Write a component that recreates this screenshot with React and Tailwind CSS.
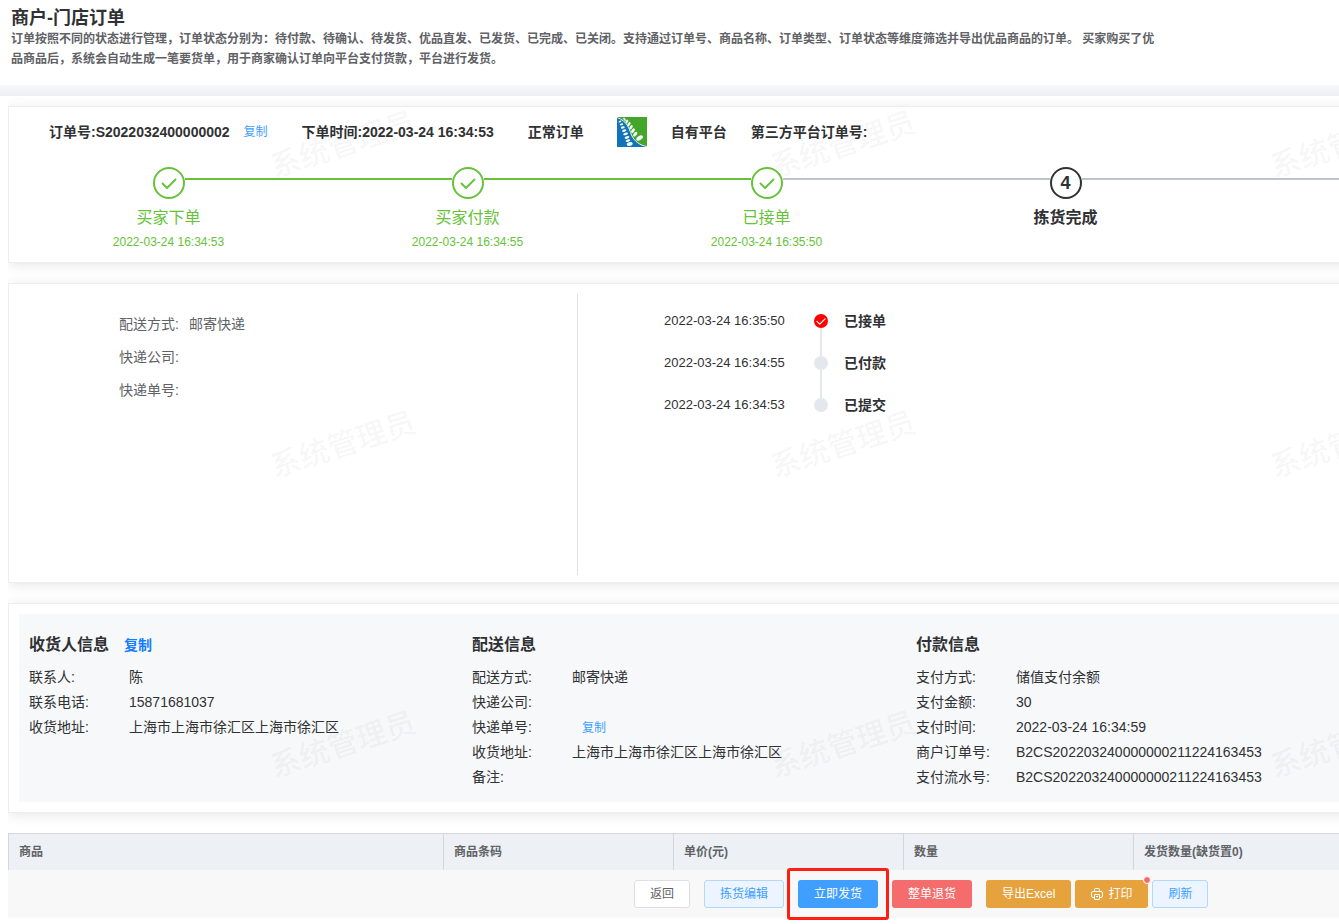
import React from "react";

const steps = [
  { title: "买家下单", time: "2022-03-24 16:34:53", done: true },
  { title: "买家付款", time: "2022-03-24 16:34:55", done: true },
  { title: "已接单", time: "2022-03-24 16:35:50", done: true },
  { title: "拣货完成", time: "", done: false },
];

const logs = [
  { time: "2022-03-24 16:35:50", text: "已接单" },
  { time: "2022-03-24 16:34:55", text: "已付款" },
  { time: "2022-03-24 16:34:53", text: "已提交" },
];

const delivery = [
  { label: "配送方式:", value: "邮寄快递" },
  { label: "快递公司:", value: "" },
  { label: "快递单号:", value: "" },
];

const receiverRows = [
  { label: "联系人:", value: "陈" },
  { label: "联系电话:", value: "15871681037" },
  { label: "收货地址:", value: "上海市上海市徐汇区上海市徐汇区" },
];

const deliveryRows = [
  { label: "配送方式:", value: "邮寄快递" },
  { label: "快递公司:", value: "" },
  { label: "快递单号:", value: "", copy: true },
  { label: "收货地址:", value: "上海市上海市徐汇区上海市徐汇区" },
  { label: "备注:", value: "" },
];

const paymentRows = [
  { label: "支付方式:", value: "储值支付余额" },
  { label: "支付金额:", value: "30" },
  { label: "支付时间:", value: "2022-03-24 16:34:59" },
  { label: "商户订单号:", value: "B2CS202203240000000211224163453" },
  { label: "支付流水号:", value: "B2CS202203240000000211224163453" },
];

const PlatformLogo = () => (
  <svg width="30" height="30" viewBox="0 0 30 30" className="shrink-0">
    <rect width="30" height="30" fill="#43a62b" />
    <path d="M0 0 H1 C10 4 12 11 14.500 18 C17 24 23 28.500 30 29.500 V30 H0 Z" fill="#1273b8" />
    <path
      d="M0 0.500 C10 4 12 11 14.500 18 C17 24 23 28.500 30 29.500"
      fill="none"
      stroke="#e9f5ee"
      strokeWidth="1"
    />
    <g fill="#f4faf6">
      <ellipse cx="7.500" cy="2.300" rx="1.800" ry="1" transform="rotate(55 7.500 2.300)" />
      <ellipse cx="9.800" cy="4.500" rx="2" ry="1.100" transform="rotate(-55 9.800 4.500)" />
      <ellipse cx="12" cy="7.200" rx="2.300" ry="1.200" transform="rotate(-58 12 7.200)" />
      <ellipse cx="14" cy="10.300" rx="2.500" ry="1.300" transform="rotate(-58 14 10.300)" />
      <ellipse cx="16" cy="13.600" rx="2.600" ry="1.400" transform="rotate(-55 16 13.600)" />
      <ellipse cx="18.200" cy="17.200" rx="2.800" ry="1.500" transform="rotate(-50 18.200 17.200)" />
      <ellipse cx="22.600" cy="21" rx="3.700" ry="2.100" transform="rotate(-32 22.600 21)" />
      <ellipse cx="3" cy="4.500" rx="1.500" ry="0.800" transform="rotate(-15 3 4.500)" />
      <ellipse cx="4.500" cy="7.400" rx="1.800" ry="1" transform="rotate(-15 4.500 7.400)" />
      <ellipse cx="5.800" cy="10.400" rx="2" ry="1.100" transform="rotate(-15 5.800 10.400)" />
      <ellipse cx="7.200" cy="13.600" rx="2.200" ry="1.200" transform="rotate(-15 7.200 13.600)" />
      <ellipse cx="8.600" cy="16.900" rx="2.400" ry="1.300" transform="rotate(-15 8.600 16.900)" />
      <ellipse cx="10" cy="20.400" rx="2.500" ry="1.300" transform="rotate(-15 10 20.400)" />
      <ellipse cx="11" cy="23.700" rx="2.400" ry="1.200" transform="rotate(-15 11 23.700)" />
      <ellipse cx="12.700" cy="27" rx="3" ry="1.900" transform="rotate(-15 12.700 27)" />
    </g>
  </svg>
);

const PrinterIcon = () => (
  <svg width="12" height="12" viewBox="0 0 12 12" fill="none" stroke="currentColor" strokeWidth="1">
    <path d="M3.500 3.500 V1.500 Q3.500 0.500 4.500 0.500 H7.500 Q8.500 0.500 8.500 1.500 V3.500" />
    <path d="M3 9.500 H2 Q0.500 9.500 0.500 8 V5 Q0.500 3.500 2 3.500 H10 Q11.500 3.500 11.500 5 V8 Q11.500 9.500 10 9.500 H9" />
    <path d="M3.500 6.500 H8.500 V11.500 H3.500 Z M5 8.500 H7" />
  </svg>
);

const Check = ({ size }) => (
  <svg
    width={size}
    height={size}
    viewBox="0 0 16 16"
    fill="none"
    stroke="currentColor"
    strokeWidth="1.900"
    strokeLinecap="round"
    strokeLinejoin="round"
  >
    <path d="M1.500 8.500 L6 13 L14.500 4.500" />
  </svg>
);

const Card = ({ children }) => (
  <section className="border border-[#ebeef5] bg-white shadow-[0_2px_12px_rgba(0,0,0,0.1)]">
    {children}
  </section>
);

const InfoColumn = ({ title, rows, action }) => (
  <div>
    <div className="flex h-[22px] items-center gap-[15px]">
      <h2 className="text-base leading-5 font-bold">{title}</h2>
      {action}
    </div>
    <dl className="mt-2">
      {rows.map((row) => (
        <div key={row.label} className="flex h-[25px] items-center">
          <dt className="w-[100px] shrink-0">{row.label}</dt>
          <dd>
            {row.value}
            {row.copy && (
              <button type="button" className="ml-2.5 text-xs text-[#409eff]">
                复制
              </button>
            )}
          </dd>
        </div>
      ))}
    </dl>
  </div>
);

const Watermark = () => (
  <div
    aria-hidden="true"
    className="pointer-events-none absolute inset-0 overflow-hidden pl-[93px] select-none"
  >
    {[0, 1, 2].map((r) => (
      <div key={r} className="flex h-[300px]">
        {[0, 1, 2].map((c) => (
          <div key={c} className="w-[500px] shrink-0 pt-[123px] text-center">
            <span className="inline-block -rotate-18 text-[30px] leading-[44px] font-medium text-black/5">
              系统管理员
            </span>
          </div>
        ))}
      </div>
    ))}
  </div>
);

const App = () => {
  return (
    <div className="relative min-h-screen overflow-x-hidden bg-white font-['Liberation_Sans','Noto_Sans_CJK_SC',sans-serif] text-sm text-[#303133]">
      {/* Page heading */}
      <header className="px-[11px] pt-2 pb-4">
        <h1 className="text-lg leading-[21px] font-bold">商户-门店订单</h1>
        <p className="max-w-[1150px] text-xs leading-5 font-bold text-[#606266]">
          订单按照不同的状态进行管理，订单状态分别为：待付款、待确认、待发货、优品直发、已发货、已完成、已关闭。支持通过订单号、商品名称、订单类型、订单状态等维度筛选并导出优品商品的订单。
          买家购买了优品商品后，系统会自动生成一笔要货单，用于商家确认订单向平台支付货款，平台进行发货。
        </p>
      </header>
      <div className="h-[11px] bg-linear-to-b from-[#f7f8fa] to-[#edeff2]" />

      <main className="ml-2 overflow-hidden pt-2.5 pb-1.5">
        {/* Cards run past the right edge of the window */}
        <div className="-mr-5 flex flex-col gap-5">
          <Card>
            <div className="flex h-10 items-end pl-10 font-bold whitespace-nowrap">
              <div className="flex h-[30px] items-center">
                <span>订单号:S2022032400000002</span>
                <button type="button" className="ml-3.5 text-xs font-normal text-[#409eff]">
                  复制
                </button>
                <span className="ml-[34px]">下单时间:2022-03-24 16:34:53</span>
                <span className="mr-[33px] ml-[34px]">正常订单</span>
                <PlatformLogo />
                <span className="ml-6">自有平台</span>
                <span className="ml-6">第三方平台订单号:</span>
              </div>
            </div>

            <ol className="mt-5 flex px-2.5 pb-2.5">
              {steps.map((step, i) => (
                <li
                  key={step.title}
                  className={`w-[299px] shrink-0 text-center ${step.done ? "text-[#67c23a]" : "text-[#303133]"}`}
                >
                  <div className="flex items-center">
                    <div
                      className={`mb-2 h-0.5 flex-1 ${i === 0 ? "bg-transparent" : i < 3 ? "bg-[#67c23a]" : "bg-[#c0c4cc]"}`}
                    />
                    <div className="flex size-8 items-center justify-center rounded-full border-2 border-current text-lg font-bold">
                      {step.done ? <Check size={16} /> : i + 1}
                    </div>
                    <div className={`mb-2 h-0.5 flex-1 ${i < 2 ? "bg-[#67c23a]" : "bg-[#c0c4cc]"}`} />
                  </div>
                  <div className={`mt-[7px] text-base leading-6 ${step.done ? "" : "font-bold"}`}>
                    {step.title}
                  </div>
                  <div className="mt-0.5 h-5 text-xs leading-5">{step.time}</div>
                </li>
              ))}
              <li aria-hidden="true" className="mt-[11px] -mr-2.5 h-0.5 flex-1 bg-[#c0c4cc]" />
            </ol>
          </Card>

          <Card>
            <div className="flex h-[298px] px-2.5 pt-2.5 pb-[7px]">
              <dl className="w-[559px] shrink-0 border-r border-[#dcdfe6] pt-[13px] pl-[100px] text-[#606266]">
                {delivery.map((row) => (
                  <div key={row.label} className="flex h-[33px] items-center">
                    <dt className="w-[70px]">{row.label}</dt>
                    <dd>{row.value}</dd>
                  </div>
                ))}
              </dl>
              <ol className="pt-[17px] pl-[86px]">
                {logs.map((log, i) => (
                  <li key={log.time} className="flex h-[42px]">
                    <time className="w-[150px] text-[13px] leading-5">{log.time}</time>
                    <div className="flex w-3.5 flex-col items-center pt-[3px]">
                      {i === 0 ? (
                        <span className="flex size-3.5 shrink-0 items-center justify-center rounded-full bg-[#ff0000] text-white">
                          <Check size={10} />
                        </span>
                      ) : (
                        <span className="size-3.5 shrink-0 rounded-full bg-[#e4e7ed]" />
                      )}
                      {i < logs.length - 1 && <span className="-mb-[3px] w-0.5 flex-1 bg-[#e4e7ed]" />}
                    </div>
                    <span className="ml-4 leading-5 font-bold">{log.text}</span>
                  </li>
                ))}
              </ol>
            </div>
          </Card>

          <Card>
            <div className="p-2.5">
              <div className="grid grid-cols-[443px_444px_1fr] bg-[#f7f8fa] px-2.5 pt-5 pb-[13px]">
                <InfoColumn
                  title="收货人信息"
                  rows={receiverRows}
                  action={
                    <button type="button" className="font-bold text-[#127dff]">
                      复制
                    </button>
                  }
                />
                <InfoColumn title="配送信息" rows={deliveryRows} />
                <InfoColumn title="付款信息" rows={paymentRows} />
              </div>
            </div>
          </Card>

          <div>
            <table className="w-full table-fixed bg-[#edf0f5] text-left text-xs text-[#606266]">
              <thead>
                <tr className="h-9 border-t border-[#d3d6db]">
                  <th className="w-[435px] border-l border-[#d3d6db] px-2.5">商品</th>
                  <th className="w-[230px] border-l border-[#d3d6db] px-2.5">商品条码</th>
                  <th className="w-[230px] border-l border-[#d3d6db] px-2.5">单价(元)</th>
                  <th className="w-[230px] border-l border-[#d3d6db] px-2.5">数量</th>
                  <th className="border-l border-[#d3d6db] px-2.5">发货数量(缺货置0)</th>
                </tr>
              </thead>
            </table>

            {/* Action bar */}
            <div className="flex h-12 items-center gap-3.5 bg-[#f8f8f8] pl-[626px] text-xs whitespace-nowrap">
              <button
                type="button"
                className="h-7 rounded-[3px] border border-[#dcdfe6] bg-white px-[15px] text-[#606266]"
              >
                返回
              </button>
              <button
                type="button"
                className="h-7 rounded-[3px] border border-[#b3d8ff] bg-[#ecf5ff] px-[15px] text-[#409eff]"
              >
                拣货编辑
              </button>
              <div className="relative">
                <button type="button" className="block h-7 rounded-[3px] bg-[#409eff] px-4 text-white">
                  立即发货
                </button>
                <span className="pointer-events-none absolute -inset-x-[11px] -inset-y-3 rounded-[3px] border-3 border-[#ff1e12]" />
              </div>
              <button type="button" className="h-7 rounded-[3px] bg-[#f56c6c] px-4 text-white">
                整单退货
              </button>
              <div className="flex gap-1">
                <button type="button" className="h-7 rounded-[3px] bg-[#e6a23c] px-4 text-white">
                  导出Excel
                </button>
                <div className="relative">
                  <button
                    type="button"
                    className="flex h-7 items-center gap-[5px] rounded-[3px] bg-[#e6a23c] px-4 text-white"
                  >
                    <PrinterIcon />
                    打印
                  </button>
                  <span className="absolute -top-1 -right-[3px] size-2 rounded-full border border-white bg-[#f56c6c]" />
                </div>
                <button
                  type="button"
                  className="h-7 rounded-[3px] border border-[#b3d8ff] bg-[#ecf5ff] px-[15px] text-[#409eff]"
                >
                  刷新
                </button>
              </div>
            </div>
          </div>
        </div>
      </main>

      <Watermark />
    </div>
  );
};

export default App;
